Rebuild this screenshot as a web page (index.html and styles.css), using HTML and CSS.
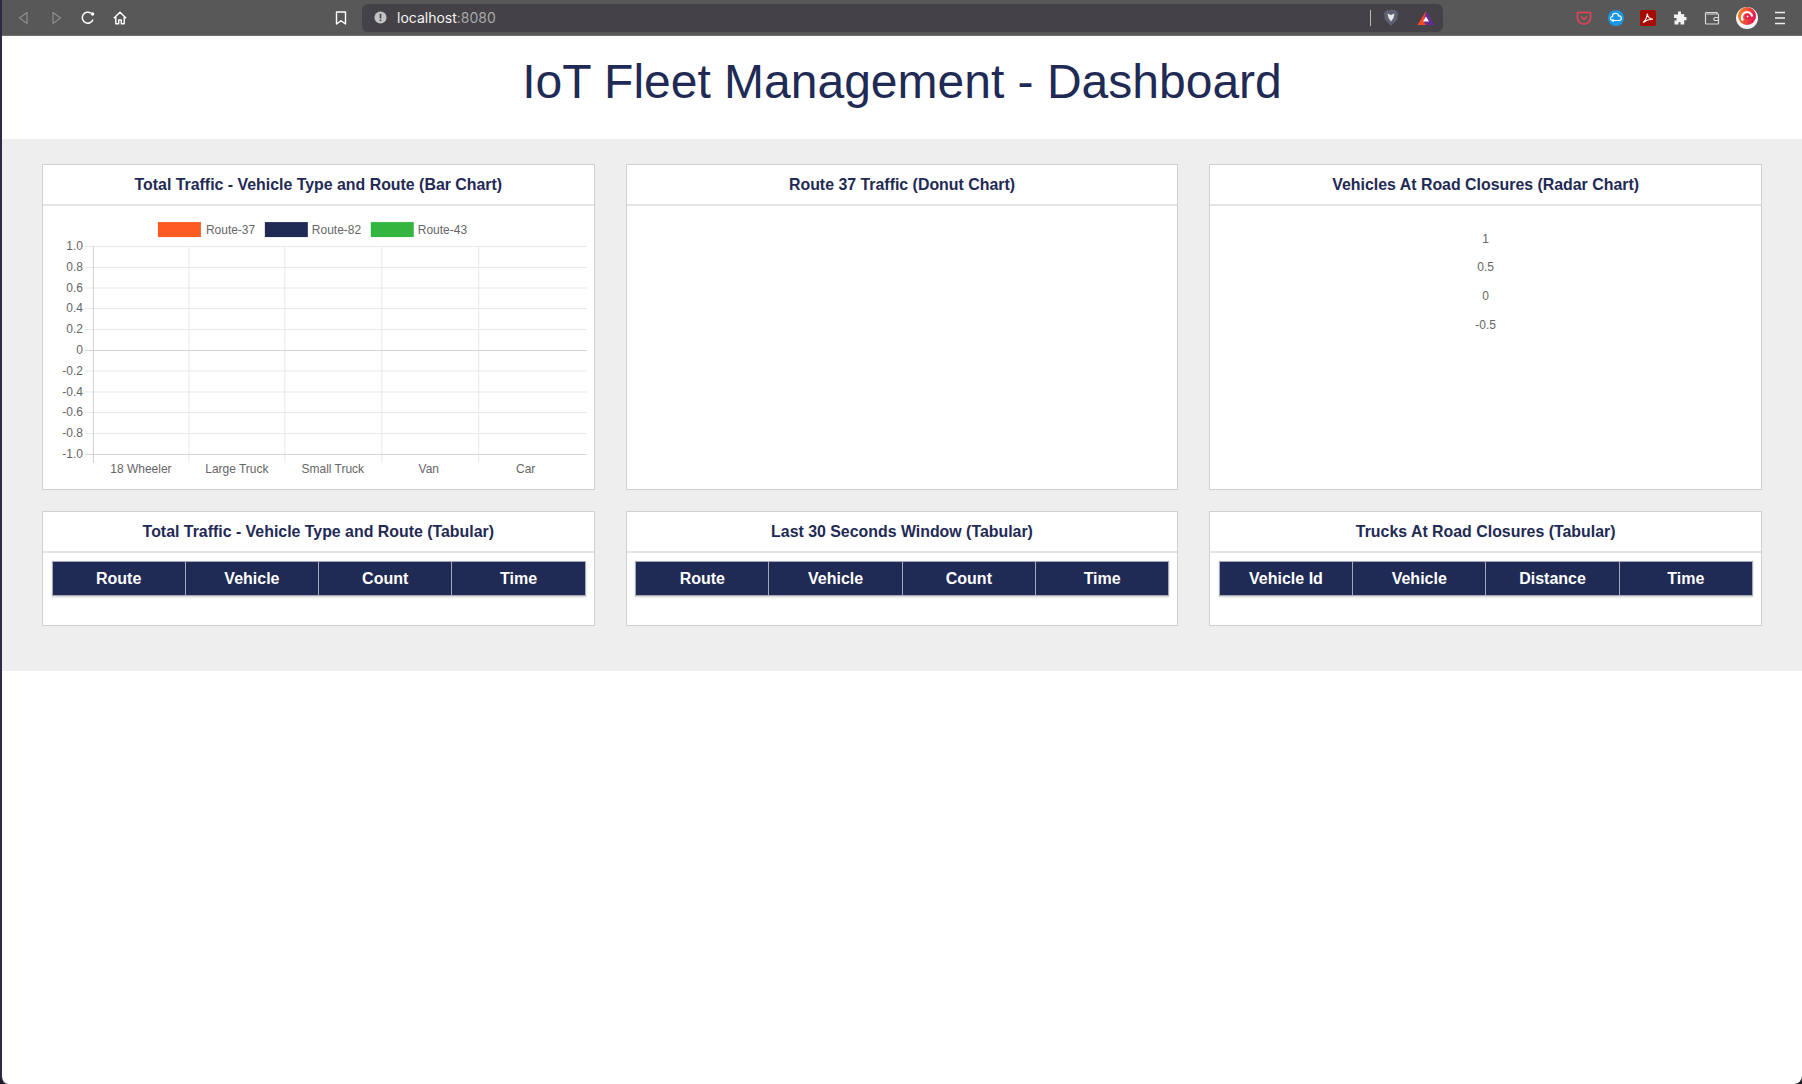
FILE: index.html
```html
<!DOCTYPE html>
<html lang="en">
<head>
  <meta charset="UTF-8"/>
  <meta name="viewport" content="width=device-width, initial-scale=1.0"/>
  <title>IoT Fleet Management - Dashboard</title>
  <link rel="stylesheet" href="styles.css">
</head>
<body>
  <div class="toolbar">
    <div class="nav-icons">
      <svg class="icon" viewBox="0 0 16 16"><path d="M11 2.500v11L3.500 8z" fill="none" stroke="#8b8b8b" stroke-width="1.300" stroke-linejoin="round"/></svg>
      <svg class="icon" viewBox="0 0 16 16"><path d="M5 2.500v11L12.500 8z" fill="none" stroke="#8b8b8b" stroke-width="1.300" stroke-linejoin="round"/></svg>
      <svg class="icon" viewBox="0 0 16 16"><path d="M13 9.500A5.500 5.500 0 1 1 11 3.200" fill="none" stroke="#fff" stroke-width="1.500"/><circle cx="12.600" cy="4" r="1.700" fill="#fff"/></svg>
      <svg class="icon" viewBox="0 0 16 16"><path d="M1.800 8.200 8 2.200l6.200 6M3.800 7v6.800h2.900V10h2.600v3.800h2.900V7" fill="none" stroke="#fff" stroke-width="1.400" stroke-linejoin="round"/></svg>
    </div>
    <svg class="icon bookmark" viewBox="0 0 16 16"><path d="M3.500 2h9v12L8 10.800 3.500 14z" fill="none" stroke="#fff" stroke-width="1.400" stroke-linejoin="round"/></svg>
    <div class="urlbar">
      <svg class="icon-sm" viewBox="0 0 14 14"><circle cx="7" cy="7" r="6.500" fill="#c4c4c6"/><rect x="6.100" y="3" width="1.800" height="5" fill="#46454a"/><rect x="6.100" y="9.200" width="1.800" height="1.800" fill="#46454a"/></svg>
      <span class="url">localhost<span class="port">:8080</span></span>
      <span class="url-sep"></span>
      <svg class="icon brave" viewBox="0 0 16 18"><path d="M3 1.500 5 1h6l2 .5L15 4l-.8 6.500L8 17 1.800 10.500 1 4z" fill="#5f6072"/><path d="M4.500 4.500 8 6l3.500-1.500L10.500 9 8 12.500 5.500 9z" fill="#e6e6ea"/></svg>
      <svg class="icon bat" viewBox="0 0 18 16"><path d="M9 1 17.500 15H.500z" fill="#662d91"/><path d="M9 1 .500 15H6z" fill="#ff4724"/><path d="M.500 15 5.500 10.500 9 15z" fill="#ff4724"/><path d="M9 6.500 12 11.500H6z" fill="#fff"/></svg>
    </div>
    <div class="ext-icons">
      <svg class="icon" viewBox="0 0 16 16"><path d="M1.500 2.500h13V8a6.500 6 0 0 1-13 0z" fill="none" stroke="#ef4056" stroke-width="1.500" stroke-linejoin="round"/><path d="M5 6.500 8 9.500l3-3" fill="none" stroke="#ef4056" stroke-width="1.500"/></svg>
      <svg class="icon" viewBox="0 0 16 16"><circle cx="8" cy="8" r="8" fill="#1a96e8"/><path d="M4.500 10.500a2 2 0 0 1 0-4 3 3 0 0 1 6-.5 2.300 2.300 0 0 1 1 4.500z" fill="none" stroke="#fff" stroke-width="1.200"/><circle cx="5" cy="10.500" r="1.300" fill="#fff"/></svg>
      <svg class="icon" viewBox="0 0 16 16"><rect width="16" height="16" rx="2" fill="#a80c00"/><path d="M3 12.500C5 11 7 7 7.300 3.500c.3 3 2.500 5.500 5.700 5.800-3-.2-6.500.8-10 3.200z" fill="none" stroke="#fff" stroke-width="1.100"/></svg>
      <svg class="icon" viewBox="0 0 16 16"><path d="M6 1.500h3v2.300c0 .7 3.200.2 3.200.2v3h2.300v3.300h-2.300v4.200H8.500v-2.200h-2V14.500H2.500v-4h2v-2.500h-2.500V4.500H6z" fill="#f1f1f1"/></svg>
      <svg class="icon" viewBox="0 0 16 16"><path d="M13 4V2.500H2.500a1 1 0 0 0-1 1V13a1 1 0 0 0 1 1h11.500a.5.5 0 0 0 .5-.5V4.500a.5.5 0 0 0-.5-.5H2.500" fill="none" stroke="#d8d8d8" stroke-width="1.200"/><rect x="10" y="7.500" width="4.500" height="3" rx="1" fill="none" stroke="#d8d8d8" stroke-width="1.200"/></svg>
      <svg class="icon gauge" viewBox="0 0 22 22">
        <defs>
          <linearGradient id="swirl" x1="0" y1="0" x2="1" y2="0.300">
            <stop offset="0" stop-color="#f7931e"/>
            <stop offset="1" stop-color="#e8174f"/>
          </linearGradient>
        </defs>
        <circle cx="11" cy="11" r="11" fill="#f6f6f6"/>
        <circle cx="11" cy="9" r="9" fill="url(#swirl)"/>
        <path d="M7 13.500A5.200 5.200 0 1 1 16.200 9.500" fill="none" stroke="#fff" stroke-width="2.200"/>
        <circle cx="11.500" cy="9.500" r="2.800" fill="#e8174f"/>
        <circle cx="11.500" cy="9.500" r="1" fill="#fff"/>
      </svg>
      <svg class="icon menu" viewBox="0 0 16 16"><path d="M3 2.500h10M3 8h10M3 13.500h10" stroke="#efefef" stroke-width="1.300"/></svg>
    </div>
  </div>

  <div class="page">
    <h1 class="page-title">IoT Fleet Management - Dashboard</h1>

    <div class="dashboard">
      <div class="card">
        <div class="card-title">Total Traffic - Vehicle Type and Route (Bar Chart)</div>
        <div class="chart-body">
          <svg class="chart" viewBox="0 0 551 283">
            <g class="legend">
              <rect x="115" y="16" width="43" height="15" fill="#fb5a22"/>
              <text x="163" y="28">Route-37</text>
              <rect x="222" y="16" width="43" height="15" fill="#1f2a55"/>
              <text x="269" y="28">Route-82</text>
              <rect x="328" y="16" width="43" height="15" fill="#33b540"/>
              <text x="375" y="28">Route-43</text>
            </g>
            <g class="grid">
              <path d="M42 40.500H544M42 61.500H544M42 82H544M42 102.500H544M42 123.500H544M42 165H544M42 186H544M42 206.500H544M42 227.500H544"/>
              <path d="M146 40V257M242 40V257M339 40V257M436 40V257"/>
            </g>
            <g class="axis">
              <path d="M50.500 40V257M42 144.500H544M42 248.500H544"/>
            </g>
            <g class="ticks-y">
              <text x="40" y="44">1.0</text>
              <text x="40" y="65">0.8</text>
              <text x="40" y="86">0.6</text>
              <text x="40" y="106">0.4</text>
              <text x="40" y="127">0.2</text>
              <text x="40" y="148">0</text>
              <text x="40" y="169">-0.2</text>
              <text x="40" y="190">-0.4</text>
              <text x="40" y="210">-0.6</text>
              <text x="40" y="231">-0.8</text>
              <text x="40" y="252">-1.0</text>
            </g>
            <g class="ticks-x">
              <text x="98" y="267.500">18 Wheeler</text>
              <text x="194" y="267.500">Large Truck</text>
              <text x="290" y="267.500">Small Truck</text>
              <text x="386" y="267.500">Van</text>
              <text x="483" y="267.500">Car</text>
            </g>
          </svg>
        </div>
      </div>

      <div class="card">
        <div class="card-title">Route 37 Traffic (Donut Chart)</div>
        <div class="chart-body"></div>
      </div>

      <div class="card">
        <div class="card-title">Vehicles At Road Closures (Radar Chart)</div>
        <div class="chart-body radar-labels">
          <span>1</span>
          <span>0.5</span>
          <span>0</span>
          <span>-0.5</span>
        </div>
      </div>

      <div class="card">
        <div class="card-title">Total Traffic - Vehicle Type and Route (Tabular)</div>
        <div class="table-body">
          <table>
            <thead><tr><th>Route</th><th>Vehicle</th><th>Count</th><th>Time</th></tr></thead>
          </table>
        </div>
      </div>

      <div class="card">
        <div class="card-title">Last 30 Seconds Window (Tabular)</div>
        <div class="table-body">
          <table>
            <thead><tr><th>Route</th><th>Vehicle</th><th>Count</th><th>Time</th></tr></thead>
          </table>
        </div>
      </div>

      <div class="card">
        <div class="card-title">Trucks At Road Closures (Tabular)</div>
        <div class="table-body">
          <table>
            <thead><tr><th>Vehicle Id</th><th>Vehicle</th><th>Distance</th><th>Time</th></tr></thead>
          </table>
        </div>
      </div>
    </div>
  </div>
</body>
</html>
```

FILE: styles.css
```css
html {
  height: 100%;
  background: #1c1a22;
}

body {
  height: 100%;
  margin: 0;
  box-sizing: border-box;
  background: white;
  border-left: 2px solid #2b2b45;
  border-radius: 0 0 8px 8px;
  font-family: 'Liberation Sans', Arial, sans-serif;
  color: #1f2a55;
  display: flex;
  flex-direction: column;
  overflow: hidden;
}

/* browser chrome */
.toolbar {
  height: 35px;
  flex: none;
  background: #585858;
  border-bottom: 1px solid #6e6e6e;
  display: flex;
  align-items: center;
  padding-left: 14px;
}

.icon {
  width: 16px;
  height: 16px;
  flex: none;
}

.icon-sm {
  width: 13px;
  height: 13px;
  flex: none;
}

.nav-icons {
  display: flex;
  gap: 16px;
}

.bookmark {
  margin-left: 205px;
}

.urlbar {
  width: 1081px;
  height: 28px;
  margin-left: 13px;
  background: #444246;
  border-radius: 6px;
  display: flex;
  align-items: center;
  padding-left: 12px;
  box-sizing: border-box;
}

.url {
  margin-left: 10px;
  font-family: Inter, 'Liberation Sans', sans-serif;
  font-size: 14px;
  color: #f4f4f4;
}

.port {
  color: #a9a9a9;
}

.url-sep {
  width: 1px;
  height: 16px;
  background: #b9b9b9;
  margin-left: auto;
}

.brave {
  margin-left: 12px;
  height: 18px;
}

.bat {
  margin-left: 18px;
  margin-right: 8px;
  width: 18px;
}

.ext-icons {
  display: flex;
  align-items: center;
  gap: 16px;
  margin-left: 133px;
}

.gauge {
  width: 22px;
  height: 22px;
  margin: 0 -2px 0 0;
}

/* page */
.page {
  flex: 1;
}

.page-title {
  margin: 0;
  height: 103px;
  line-height: 92px;
  text-align: center;
  font-size: 48px;
  font-weight: normal;
}

.dashboard {
  background: #eee;
  padding: 25px 40px 45px;
  display: grid;
  grid-template-columns: repeat(3, 1fr);
  column-gap: 31px;
  row-gap: 21px;
}

.card {
  background: white;
  border: 1px solid #d0d0d0;
}

.card-title {
  height: 39px;
  line-height: 39px;
  text-align: center;
  font-size: 15.9px;
  font-weight: bold;
  border-bottom: 2px solid #e4e4e4;
}

.chart-body {
  height: 283px;
}

.chart {
  display: block;
  width: 100%;
  height: 100%;
}

.chart text {
  font-family: 'Liberation Sans', Arial, sans-serif;
  font-size: 12px;
  fill: #666;
}

.grid path {
  fill: none;
  stroke: #e8e8e8;
}

.axis path {
  fill: none;
  stroke: #d2d2d2;
}

.ticks-y text {
  text-anchor: end;
}

.ticks-x text {
  text-anchor: middle;
}

.radar-labels {
  display: flex;
  flex-direction: column;
  align-items: center;
  gap: 14.7px;
  padding-top: 25.5px;
  box-sizing: border-box;
  font-size: 12px;
  line-height: 14px;
  color: #666;
}

.table-body {
  padding: 8px 8px 29px 8.5px;
}

table {
  width: 100%;
  border-collapse: collapse;
  table-layout: fixed;
  box-shadow: 0 1px 2px rgba(0,0,0,0.2);
}

th {
  height: 33px;
  padding: 0;
  background: #1f2a55;
  color: white;
  font-size: 16px;
  font-weight: bold;
  border: 1px solid #a6a9b8;
}
```
